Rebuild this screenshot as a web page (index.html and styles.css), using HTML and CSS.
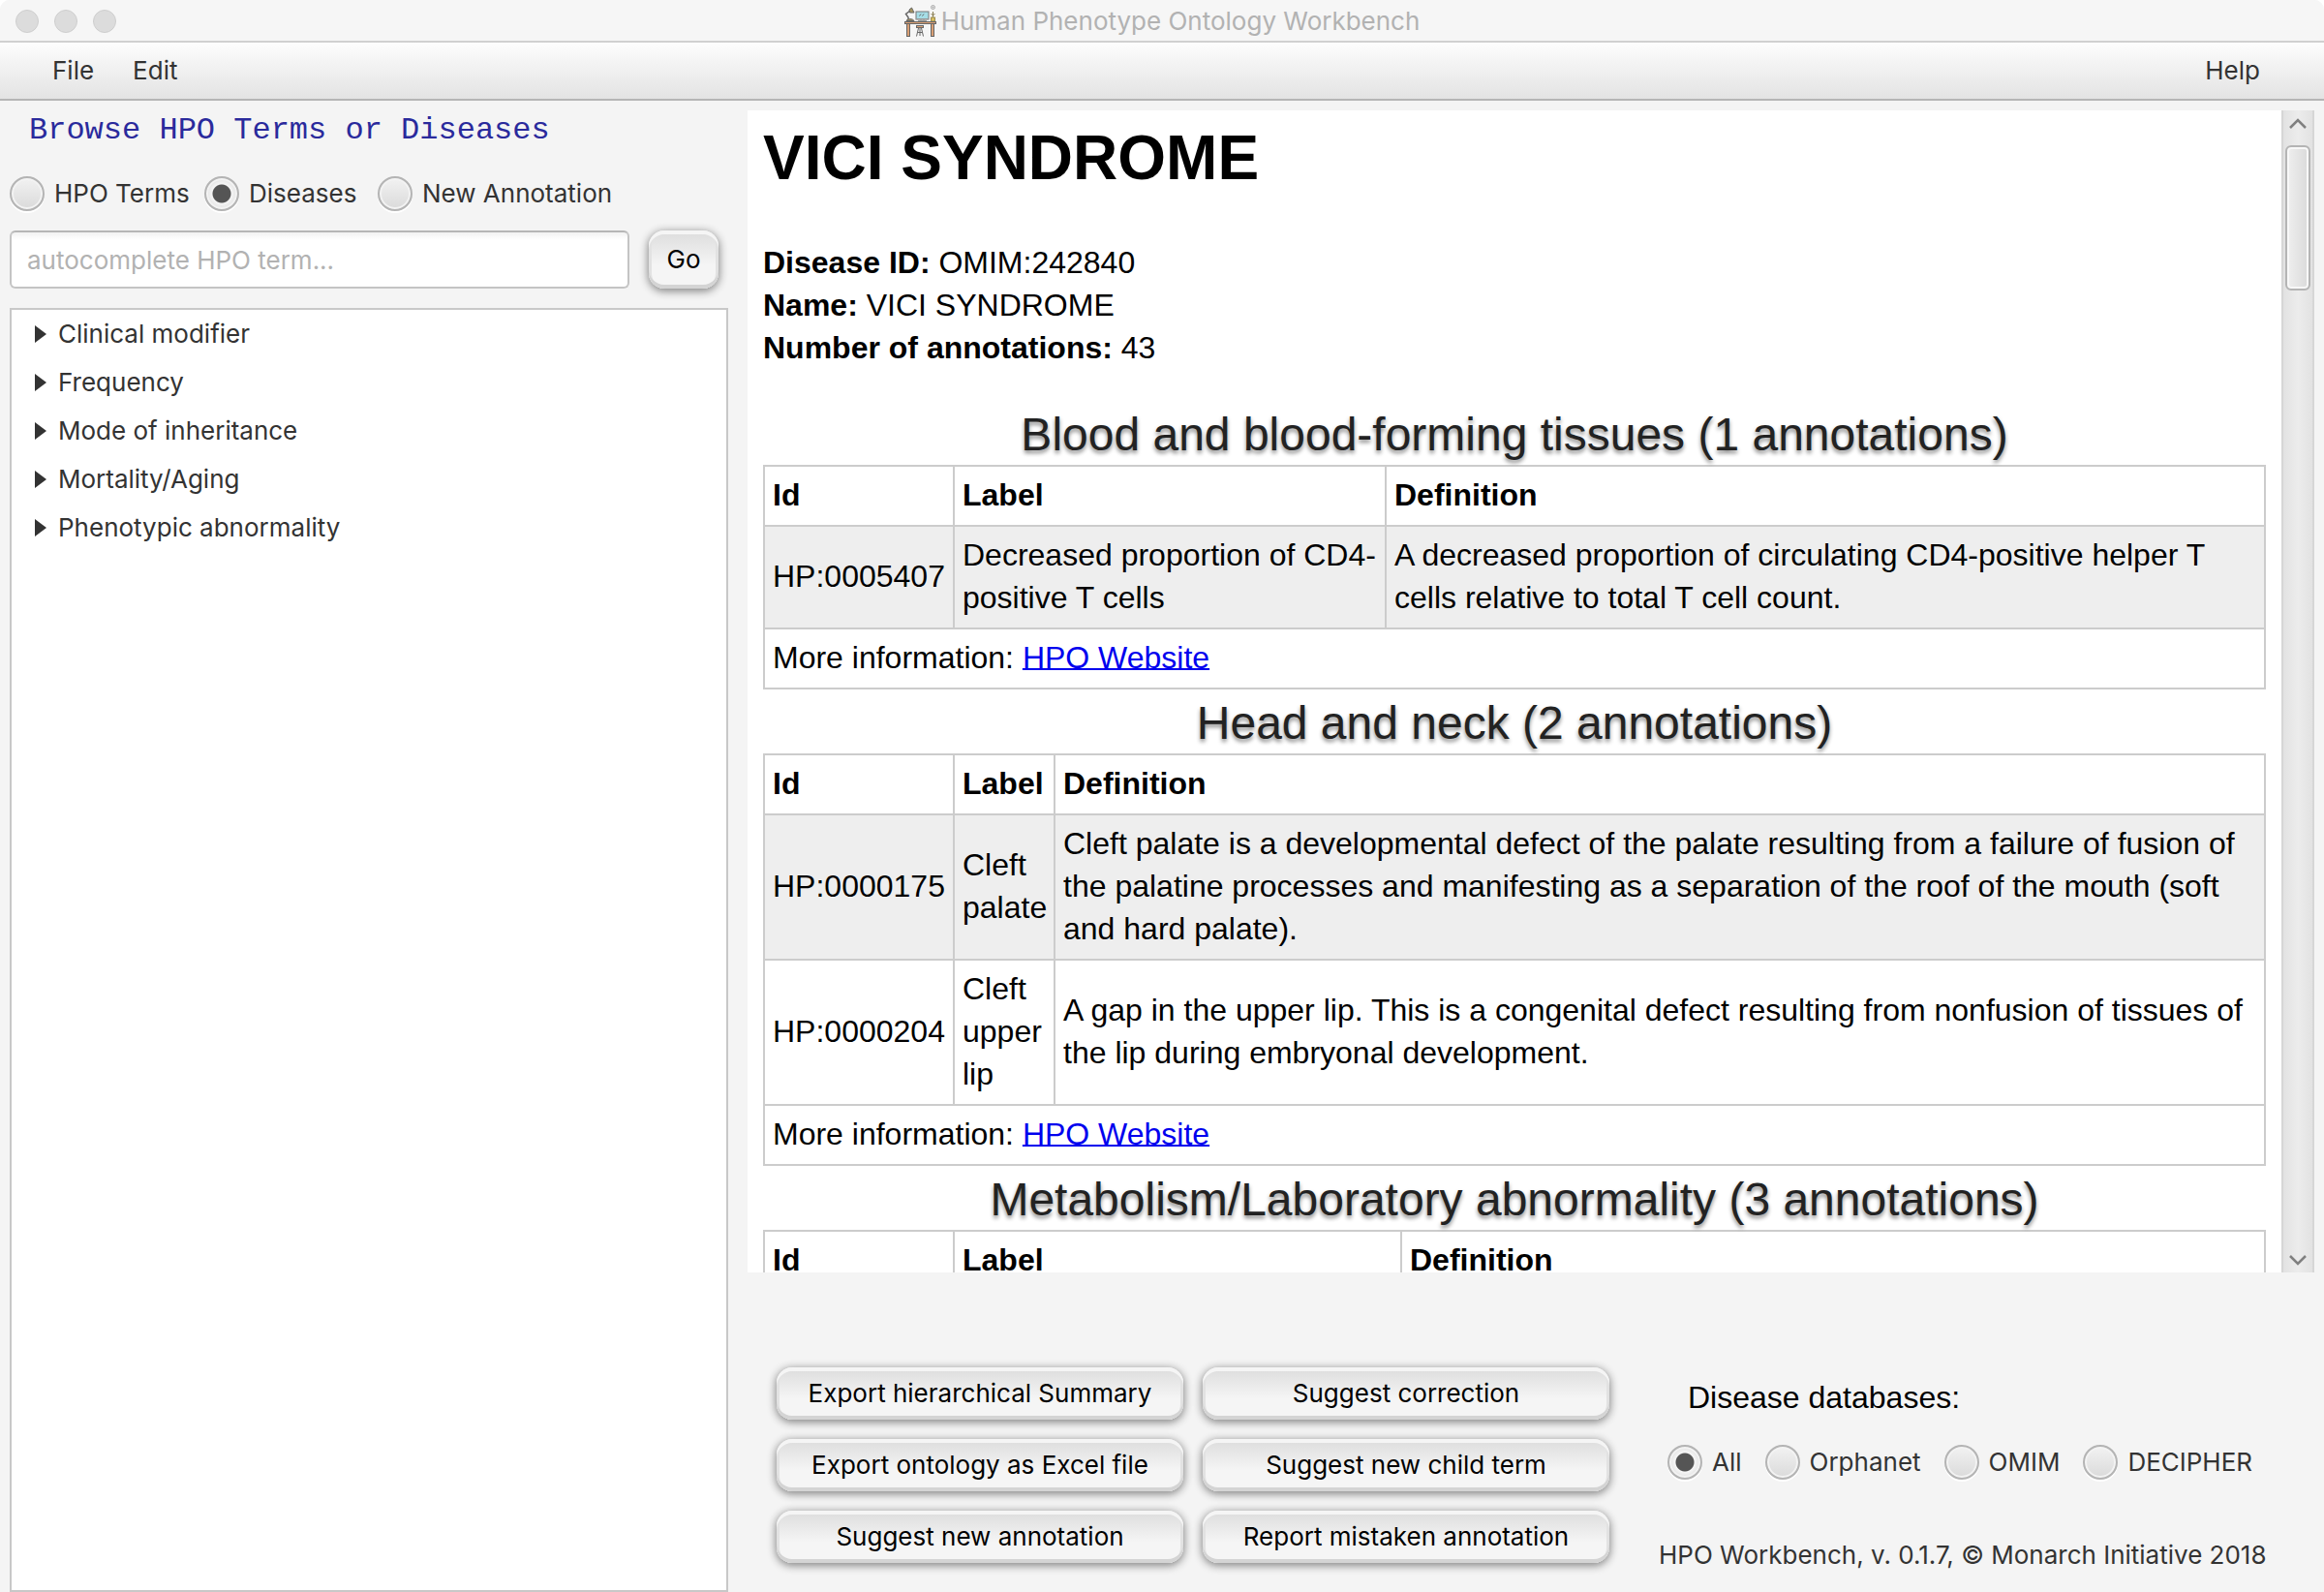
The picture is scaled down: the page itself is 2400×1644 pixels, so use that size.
FILE: index.html
```html
<!DOCTYPE html>
<html lang="en">
<head>
<meta charset="utf-8">
<title>Human Phenotype Ontology Workbench</title>
<link rel="stylesheet" href="styles.css">
</head>
<body>
<div class="window">
  <header class="titlebar">
    <div class="lights"><span class="light"></span><span class="light"></span><span class="light"></span></div>
    <div class="title">
      <svg class="title-icon" viewBox="0 0 34 34" aria-hidden="true">
        <g fill="none" stroke="#666" stroke-width="1">
          <path d="M4 16V13L1.500 9.500L6 6" stroke-width="1.500"/>
          <path d="M5 5L7.500 3L10 8L5.500 8Z" fill="#a8965e"/>
          <path d="M2 16.500C2.500 14 9 14 10 16.500Z" fill="#a8965e"/>
          <rect x="12" y="7" width="13" height="8" fill="#a5dde6" stroke="#777"/>
          <path d="M15.500 11.500L17 9.500M18.500 11.500L20 9.500"/>
          <path d="M12 14.500H25M17 15V17M20 15V17M14 16.500H23" stroke="#999"/>
          <circle cx="29.500" cy="2.500" r="2" stroke="#aaa"/>
          <circle cx="29.500" cy="2.500" r="0.500" stroke="#999"/>
          <path d="M29.500 7V14M27.500 9L29.500 11L31.500 9" stroke="#887c50"/>
          <rect x="27.500" y="13" width="4" height="4" fill="#d9c060" stroke="#998a50"/>
          <rect x="0.500" y="17.500" width="32" height="2" fill="#d99f74"/>
          <rect x="2.500" y="19.500" width="3" height="13" fill="#d99f74"/>
          <rect x="27.500" y="19.500" width="3" height="13" fill="#d99f74"/>
          <rect x="12.500" y="21.500" width="7" height="2" fill="#d99f74"/>
          <path d="M14.500 24L12.500 32.500M17.500 24L19.500 32.500M16 24V32M14 28.500H18"/>
        </g>
      </svg>
      <span>Human Phenotype Ontology Workbench</span>
    </div>
  </header>
  <nav class="menubar">
    <button class="menu" type="button">File</button>
    <button class="menu" type="button">Edit</button>
    <button class="menu menu-help" type="button">Help</button>
  </nav>
  <div class="workspace">
    <aside class="sidebar">
      <h2 class="browse-title">Browse HPO Terms or Diseases</h2>
      <div class="modes">
        <label class="option"><input class="radio" type="radio" name="mode">HPO Terms</label>
        <label class="option"><input class="radio" type="radio" name="mode" checked>Diseases</label>
        <label class="option"><input class="radio" type="radio" name="mode">New Annotation</label>
      </div>
      <form class="search">
        <input class="search-box" type="text" placeholder="autocomplete HPO term..." aria-label="HPO term">
        <button class="button button-go" type="button">Go</button>
      </form>
      <ul class="tree">
        <li class="node">Clinical modifier</li>
        <li class="node">Frequency</li>
        <li class="node">Mode of inheritance</li>
        <li class="node">Mortality/Aging</li>
        <li class="node">Phenotypic abnormality</li>
      </ul>
    </aside>
    <main class="main">
      <div class="viewer">
        <article class="document">
          <h1 class="disease">VICI SYNDROME</h1>
          <p class="facts"><b>Disease ID:</b> OMIM:242840<br><b>Name:</b> VICI SYNDROME<br><b>Number of annotations:</b> 43</p>
          <table class="terms">
            <caption>Blood and blood-forming tissues (1 annotations)</caption>
            <colgroup><col class="col-id"><col class="col-label-wide"><col></colgroup>
            <thead><tr><th>Id</th><th>Label</th><th>Definition</th></tr></thead>
            <tbody>
              <tr><td>HP:0005407</td><td>Decreased proportion of CD4-positive T cells</td><td>A decreased proportion of circulating CD4-positive helper T cells relative to total T cell count.</td></tr>
            </tbody>
            <tfoot><tr><td colspan="3">More information: <a href="#hpo">HPO Website</a></td></tr></tfoot>
          </table>
          <table class="terms">
            <caption>Head and neck (2 annotations)</caption>
            <colgroup><col class="col-id"><col class="col-label-narrow"><col></colgroup>
            <thead><tr><th>Id</th><th>Label</th><th>Definition</th></tr></thead>
            <tbody>
              <tr><td>HP:0000175</td><td>Cleft palate</td><td>Cleft palate is a developmental defect of the palate resulting from a failure of fusion of the palatine processes and manifesting as a separation of the roof of the mouth (soft and hard palate).</td></tr>
              <tr><td>HP:0000204</td><td>Cleft upper lip</td><td>A gap in the upper lip. This is a congenital defect resulting from nonfusion of tissues of the lip during embryonal development.</td></tr>
            </tbody>
            <tfoot><tr><td colspan="3">More information: <a href="#hpo">HPO Website</a></td></tr></tfoot>
          </table>
          <table class="terms">
            <caption>Metabolism/Laboratory abnormality (3 annotations)</caption>
            <colgroup><col class="col-id"><col class="col-label-metabolism"><col></colgroup>
            <thead><tr><th>Id</th><th>Label</th><th>Definition</th></tr></thead>
          </table>
        </article>
        <div class="scrollbar">
          <button class="arrow" type="button" aria-label="Scroll up"><svg viewBox="0 0 18 11" width="18" height="11"><path d="M1 10L9 2L17 10" fill="none" stroke="#808080" stroke-width="2.500"/></svg></button>
          <div class="track"><div class="thumb"></div></div>
          <button class="arrow" type="button" aria-label="Scroll down"><svg viewBox="0 0 18 11" width="18" height="11"><path d="M1 1L9 9L17 1" fill="none" stroke="#808080" stroke-width="2.500"/></svg></button>
        </div>
      </div>
      <footer class="actions">
        <div class="buttons">
          <button class="button" type="button">Export hierarchical Summary</button>
          <button class="button" type="button">Suggest correction</button>
          <button class="button" type="button">Export ontology as Excel file</button>
          <button class="button" type="button">Suggest new child term</button>
          <button class="button" type="button">Suggest new annotation</button>
          <button class="button" type="button">Report mistaken annotation</button>
        </div>
        <div class="databases">
          <h2 class="databases-title">Disease databases:</h2>
          <div class="sources">
            <label class="option"><input class="radio" type="radio" name="db" checked>All</label>
            <label class="option"><input class="radio" type="radio" name="db">Orphanet</label>
            <label class="option"><input class="radio" type="radio" name="db">OMIM</label>
            <label class="option"><input class="radio" type="radio" name="db">DECIPHER</label>
          </div>
          <p class="version">HPO Workbench, v. 0.1.7, © Monarch Initiative 2018</p>
        </div>
      </footer>
    </main>
  </div>
</div>
</body>
</html>
```
FILE: styles.css
```css
* { box-sizing: border-box; }

body {
  margin: 0;
  background: #fff;
  color: #333;
  font: 26px/32px Inter, "Liberation Sans", sans-serif;
}

button, input { font: inherit; color: inherit; }
h1, h2, p, ul { margin: 0; padding: 0; font-weight: 400; }

.window {
  display: flex;
  flex-direction: column;
  height: 100vh;
  overflow: hidden;
  background: #f4f4f4;
  border-radius: 10px 10px 0 0;
}

.titlebar {
  display: grid;
  grid-template-columns: 1fr auto 1fr;
  align-items: center;
  height: 44px;
  padding: 2px 16px 0;
  background: #f6f6f6;
  border-bottom: 2px solid #d0d0d0;
}
.lights { display: flex; gap: 16px; }
.light {
  width: 24px;
  height: 24px;
  border: 1px solid #cecece;
  border-radius: 50%;
  background: #dcdcdc;
}
.title { display: flex; align-items: center; gap: 4px; color: #b2b2b2; }
.title-icon { width: 34px; height: 34px; }

.menubar {
  display: flex;
  align-items: center;
  gap: 40px;
  height: 60px;
  padding: 0 66px 0 54px;
  background: linear-gradient(#fdfdfd, #e3e3e3);
  border-bottom: 2px solid #b5b5b5;
}
.menu { padding: 0; border: 0; background: none; }
.menu-help { margin-left: auto; }

.workspace { display: flex; flex: 1; min-height: 0; gap: 20px; padding: 0 10px; }

.sidebar { display: flex; flex-direction: column; width: 742px; }
.browse-title {
  padding: 13px 20px 0;
  color: #2a2a9c;
  font: 32px/36px "Liberation Mono", monospace;
}
.modes { display: grid; grid-template-columns: 201px 179px auto; margin-top: 29px; }
.sources { display: flex; gap: 24px; }
.option { display: flex; align-items: center; gap: 10px; height: 36px; white-space: nowrap; }

.radio {
  appearance: none;
  width: 36px;
  height: 36px;
  margin: 0;
  border: 2px solid #b4b4b4;
  border-radius: 50%;
  background: linear-gradient(#f2f2f2, #dadada);
  box-shadow: inset 0 0 0 2px #f3f3f3, 0 2px 0 #fff;
}
.radio:checked { background: radial-gradient(circle, #555 9px, #f6f6f6 10px, #e4e4e4 15px); }

.search { display: flex; gap: 20px; margin-top: 20px; padding-right: 10px; }
.search-box {
  flex: 1;
  min-width: 0;
  height: 60px;
  padding: 0 16px;
  border: 2px solid #c4c4c4;
  border-top-color: #b6b6b6;
  border-radius: 6px;
  background: linear-gradient(#f2f2f2, #fff 8px);
}
.search-box::placeholder { color: #b2b2b2; opacity: 1; }

.button {
  min-height: 54px;
  padding: 0;
  border: 0;
  border-radius: 16px;
  color: #000;
  background: linear-gradient(#dcdcdc, #f5f5f5 60%);
  box-shadow: inset 0 -4px 0 #d4d4d4, inset 0 4px 0 #f5f5f5, inset 3px 0 0 #e2e2e2, inset -3px 0 0 #e2e2e2, 0 2px 8px 1px #888;
}
.button-go { width: 72px; }

.tree {
  flex: 1;
  margin-top: 20px;
  border: 2px solid #c8c8c8;
  background: #fff;
  list-style: none;
}
.node { display: flex; align-items: center; gap: 12px; height: 50px; padding-left: 24px; }
.node::before {
  content: "";
  border-left: 12px solid #333;
  border-top: 9px solid transparent;
  border-bottom: 9px solid transparent;
}

.main { display: flex; flex: 1; flex-direction: column; min-width: 0; padding-top: 10px; }
.viewer { display: flex; flex: 1; min-height: 0; }

.document {
  flex: 1;
  overflow: hidden;
  padding: 5px 16px 0;
  background: #fff;
  color: #000;
  font: 32px/44px "Liberation Sans", Arial, sans-serif;
}
.disease { font-size: 64px; line-height: 88px; font-weight: 700; }
.facts { margin: 42px 0 33px; }

.terms { width: 100%; border-collapse: collapse; table-layout: fixed; }
.terms caption {
  padding-top: 4px;
  color: #222;
  font-size: 48px;
  line-height: 62px;
  text-shadow: 0 3px 4px #888;
}
.terms th, .terms td { padding: 7px 8px 9px; border: 2px solid #ccc; text-align: left; }
.terms tbody tr:nth-child(odd) { background: #eee; }
.terms a {
  color: #00e;
  text-decoration-thickness: 2px;
  text-underline-offset: 0;
  text-decoration-skip-ink: none;
}
.col-id { width: 196px; }
.col-label-wide { width: 446px; }
.col-label-narrow { width: 104px; }
.col-label-metabolism { width: 462px; }

.scrollbar {
  display: flex;
  flex-direction: column;
  width: 34px;
  border: solid #d6d6d6;
  border-width: 0 2px;
  background: linear-gradient(90deg, #e2e2e2, #ececec 50%, #e2e2e2);
}
.arrow { display: flex; align-items: center; justify-content: center; height: 26px; padding: 0; border: 0; background: none; }
.track { flex: 1; padding: 10px 2px; }
.thumb {
  height: 150px;
  border: 2px solid #b4b4b4;
  border-radius: 6px;
  background: linear-gradient(90deg, #efefef, #dadada);
  box-shadow: inset 0 0 0 2px #f8f8f8;
}

.actions { display: flex; gap: 51px; height: 330px; padding: 98px 0 0 30px; }
.buttons { display: grid; grid-template-columns: 420px 420px; grid-auto-rows: 54px; gap: 20px; }
.databases { display: flex; flex-direction: column; }
.databases-title {
  padding: 9px 0 0 30px;
  color: #000;
  font: 32px/44px "Liberation Sans", Arial, sans-serif;
}
.sources { margin-top: 27px; padding-left: 9px; }
.version { margin-top: 62px; white-space: nowrap; }
```
